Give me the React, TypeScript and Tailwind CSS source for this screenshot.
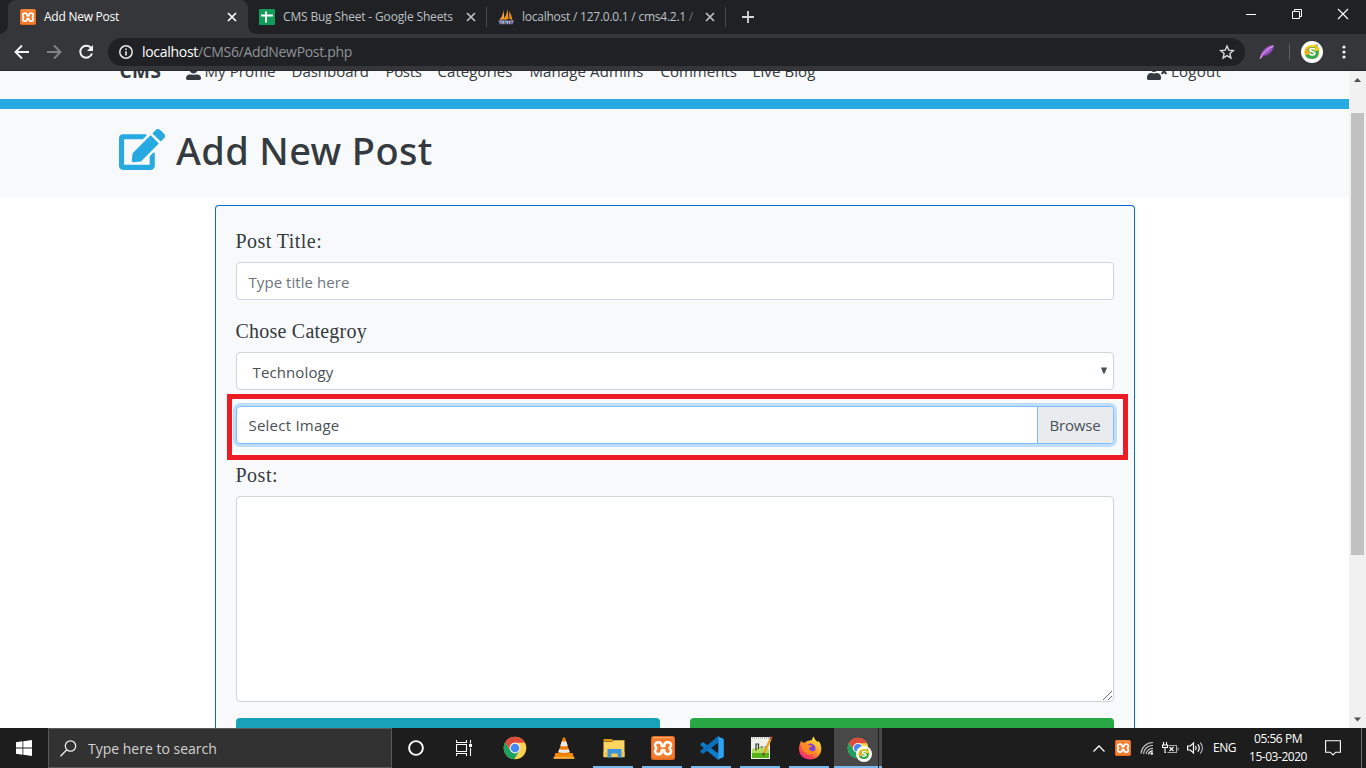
import type { ReactNode } from "react";
import { FaEdit, FaUserAlt, FaUserTimes } from "react-icons/fa";

function XamppIcon({ className }: { className: string }) {
  return (
    <svg viewBox="0 0 24 24" className={className}>
      <rect width="24" height="24" rx="2.5" fill="#e2691f" />
      <rect x="1" y="1" width="22" height="21.5" rx="2" fill="#f47c2c" />
      <path d="M2 1.600h20" stroke="#fba869" strokeWidth="1.200" />
      <path
        d="M7.600 6.200c2.200 0 3.200 1.300 3.200 4h2.400c0-2.700 1-4 3.200-4 2.400 0 3.600 1.400 3.600 3 0 1.600-1.300 2-1.300 3s1.300 1.500 1.300 3.100c0 1.600-1.200 3-3.600 3-2.200 0-3.200-1.300-3.200-4h-2.400c0 2.700-1 4-3.200 4-2.400 0-3.600-1.400-3.600-3 0-1.600 1.300-2.100 1.300-3.100s-1.300-1.400-1.300-3c0-1.600 1.200-3 3.600-3z"
        fill="#f47c2c"
        stroke="#fff"
        strokeWidth="2.500"
        strokeLinejoin="round"
      />
    </svg>
  );
}

function SheetsIcon() {
  return (
    <svg viewBox="0 0 16 16" className="size-4">
      <rect width="16" height="16" rx="1" fill="#0f9d58" />
      <path d="M2 6.500h12M7 2.500v11" stroke="#fff" strokeWidth="2" />
    </svg>
  );
}

function PhpMyAdminIcon() {
  return (
    <svg viewBox="0 0 16 16" className="size-4">
      <path d="M5.500 1 6.500 10 1 11.500Q5 7 5.500 1z" fill="#f0a04a" />
      <path d="M9.500 0 10.500 10 5.500 11Q9 6 9.500 0z" fill="#f89c0e" />
      <path d="M11 2Q14 6 14.500 11l-3.200-1z" fill="#e8871e" />
      <path d="M0 11.200h16l-1.200 4H1.500z" fill="#6c6f96" />
      <path d="M2 12.500h2v2m1.500-3v3m2-2h2v2m2-2.500v2.500m2-2h1.500" stroke="#c5c7e0" strokeWidth=".8" fill="none" />
    </svg>
  );
}

function CloseIcon({ color }: { color: string }) {
  return (
    <svg viewBox="0 0 10 10" className="size-2.5">
      <path d="M1 1l8 8M9 1l-8 8" stroke={color} strokeWidth="1.700" />
    </svg>
  );
}

function ProfileBadge({ className }: { className: string }) {
  return (
    <svg viewBox="0 0 22 22" className={className}>
      <circle cx="11" cy="11" r="11" fill="#fff" />
      <path d="M3.500 11C3.500 6 8 3.500 12 4.500l2-1.500 3 2.500c2 2 2 9-1 11L9 17.500C5 17 3.500 14 3.500 11z" fill="#f9d013" />
      <path d="M17.500 9c1 5-1.500 9-5.500 9-4 0-6.500-1-8-4l7-2z" fill="#35a853" />
      <path d="M3.500 11.500C4 8 6 6 8 5.500l-1 6-1.500 3z" fill="#f2a91d" />
      <path d="M14 8.300c-1.400-1.100-5.200-1-5.200.8 0 2.200 5 .9 5 3.200 0 2-3.900 2-5.400.6" fill="none" stroke="#4aa53c" strokeWidth="3.400" />
      <path d="M14 8.300c-1.400-1.100-5.200-1-5.200.8 0 2.200 5 .9 5 3.200 0 2-3.900 2-5.400.6" fill="none" stroke="#fff" strokeWidth="1.900" />
      <path d="M15 5.500l2-2" stroke="#9aa0a6" strokeWidth="1.500" />
    </svg>
  );
}

function ChromeIcon({ className }: { className: string }) {
  return (
    <svg viewBox="0 0 24 24" className={className}>
      <circle cx="12" cy="12" r="11.300" fill="#ffd24d" />
      <path d="M2.200 6.350A11.300 11.300 0 0 0 11.200 23.300L16.600 14.600 12 12 7.400 14.600z" fill="#1aa15f" />
      <path d="M2.200 6.350A11.300 11.300 0 0 1 21.800 6.700H12A5.300 5.300 0 0 0 6.900 13.400z" fill="#dd4b3e" />
      <circle cx="12" cy="12" r="5.400" fill="#f1f1f1" />
      <circle cx="12" cy="12" r="4.300" fill="#4587f3" />
    </svg>
  );
}

function VlcIcon() {
  return (
    <svg viewBox="0 0 24 24" className="size-6">
      <path d="M3.500 17h17l1.700 5.500H1.800z" fill="#f58a0b" />
      <path d="M1.800 21h20.400l.3 1.800h-21z" fill="#ffb347" />
      <path d="M11 1.500h2l5.200 16.500q-6.200 3-12.400 0z" fill="#ef7d0c" />
      <path d="M9.700 5.500h4.600l1.400 4.300q-3.700 1.400-7.400 0zM7.300 13q4.700 1.700 9.400 0l1 3q-5.700 2.200-11.400 0z" fill="#e9e9e9" />
    </svg>
  );
}

function ExplorerIcon() {
  return (
    <svg viewBox="0 0 24 24" className="size-6">
      <path d="M1.500 3h8.500l1.500 2.500h-10z" fill="#e09a0c" />
      <path d="M1.500 5.800h9l1-1.500h11v17h-21z" fill="#fcd462" />
      <path d="M1.500 16h21v4.500h-21z" fill="#f7c84a" />
      <path d="M5.500 13h14v8.500h-3.800v-4h-6.400v4H5.500z" fill="#3a93dd" />
    </svg>
  );
}

function VsCodeIcon() {
  return (
    <svg viewBox="0 0 24 24" className="size-6">
      <path d="M.5 7.800 2.800 6 18.500 17.500V23.700q-.5.100-.9-.2L.5 9.300z" fill="#0b7dc9" />
      <path d="M.5 16.200 2.800 18 18.500 6.500V.3q-.5-.1-.9.200L.5 14.700z" fill="#0a70bb" />
      <path d="M17.600.2 23.800 3v18l-6.200 2.800q.7-.4.700-1.400V1.600q0-1-.7-1.400z" fill="#2ca5f3" />
    </svg>
  );
}

function NotepadIcon() {
  return (
    <svg viewBox="0 0 24 24" className="size-6">
      <path d="M2 1h19v22H2z" fill="#eef1ea" />
      <path d="M3 13q8-3 17 0v9H3z" fill="#b4dc5e" />
      <path d="M3 17h17v5H3z" fill="#56b318" />
      <path d="M3 2h17" stroke="#8d8d8d" strokeWidth="1" strokeDasharray="1 1" />
      <path d="M7 7.500v7M7 8h2.500v5M11.500 11h2.500M15.500 11h1.500" stroke="#30382b" strokeWidth="1.200" fill="none" />
      <path d="M21.500 3 15 17.500" stroke="#ef9e28" strokeWidth="2.400" />
      <path d="M22.700.5l-1.200 2.800" stroke="#a3483f" strokeWidth="2.400" />
      <path d="M15 17l-.8 2.200" stroke="#3b3b3b" strokeWidth="1.500" />
    </svg>
  );
}

function FirefoxIcon() {
  return (
    <svg viewBox="0 0 24 24" className="size-6">
      <defs>
        <linearGradient id="fox" x1=".85" y1=".1" x2=".2" y2="1">
          <stop offset="0" stopColor="#ffe83f" />
          <stop offset=".45" stopColor="#ff9a25" />
          <stop offset=".75" stopColor="#ff4650" />
          <stop offset="1" stopColor="#e8238d" />
        </linearGradient>
      </defs>
      <path d="M3.200 4.800 5 6.800l2.200-.4C9 4.500 12.500 4.500 14 4c.2-1.500.6-2.500 1.800-3.500.4 2.500 2 3.500 4 5.500l1-1c2.500 4 3 7 2.200 10.500-1.300 5-5.500 8-11 8C6 23.500 1 19.500 1 13c0-3 1-5.500 2.200-8.200z" fill="url(#fox)" />
      <circle cx="12.500" cy="12.500" r="5" fill="#7b45d8" />
      <path d="M4.500 8.500c3-2 5.500-.5 7 .8l3 .2c-1 1.700-3 1.500-3.500 3 .5 3 4.500 3.500 6.500 1.500-1 4-5 5.500-8.500 4-4-1.500-5.500-5-4.500-9.500z" fill="#ff8a22" />
    </svg>
  );
}

const tabText = "font-['Open_Sans',sans-serif] text-[12px] leading-4 whitespace-nowrap";

function TabStrip() {
  return (
    <div className="flex h-[34px] bg-[#202124]">
      <div className="relative ml-2 flex w-60 items-center rounded-t-lg bg-[#35363a] pl-3">
        <span className="absolute bottom-0 -left-2 size-2 bg-[radial-gradient(circle_at_0_0,#202124_7.5px,#35363a_8px)]" />
        <span className="absolute -right-2 bottom-0 size-2 bg-[radial-gradient(circle_at_100%_0,#202124_7.5px,#35363a_8px)]" />
        <XamppIcon className="size-4" />
        <span className={`${tabText} ml-2 w-[183px] tracking-[-0.25px] text-white`}>Add New Post</span>
        <CloseIcon color="#fff" />
      </div>
      <div className="flex w-[239px] items-center pl-[11px]">
        <SheetsIcon />
        <span className={`${tabText} ml-2 w-[183px] tracking-[-0.16px] text-[#bdc1c6]`}>CMS Bug Sheet - Google Sheets</span>
        <CloseIcon color="#bdc1c6" />
        <span className="ml-[10px] h-5 w-px shrink-0 bg-[#4a4c50]" />
      </div>
      <div className="flex w-[239px] items-center pl-[11px]">
        <PhpMyAdminIcon />
        <span className={`${tabText} ml-2 w-[183px] tracking-[-0.24px] text-[#bdc1c6]`}>
          localhost / 127.0.0.1 / cms4.2.1 <span className="text-[#6d7074]">/</span>
        </span>
        <CloseIcon color="#bdc1c6" />
        <span className="ml-[10px] h-5 w-px shrink-0 bg-[#4a4c50]" />
      </div>
      <div className="flex flex-1 items-center pl-[16px]">
        <svg viewBox="0 0 12 12" className="size-3">
          <path d="M6 0v12M0 6h12" stroke="#d5d7da" strokeWidth="1.800" />
        </svg>
      </div>
      <div className="flex h-7 items-center gap-9 pr-[18px]">
        <svg viewBox="0 0 10 10" className="size-2.5">
          <path d="M0 5.500h10" stroke="#fff" />
        </svg>
        <svg viewBox="0 0 10 10" className="size-2.5 overflow-visible" fill="none" stroke="#fff">
          <path d="M.5 2.500h7v7h-7zM2.500 2.500v-2h7v7h-2" />
        </svg>
        <svg viewBox="0 0 10 10" className="size-2.5 overflow-visible">
          <path d="M0 0l10 10M10 0L0 10" stroke="#fff" strokeWidth="1.100" />
        </svg>
      </div>
    </div>
  );
}

function Toolbar() {
  return (
    <div className="flex h-[37px] items-center border-b border-[#28292c] bg-[#35363a]">
      <svg viewBox="0 0 16 16" className="ml-[14px] size-4" fill="none" stroke="#f1f3f4" strokeWidth="1.900">
        <path d="M15 8H2M8 1.500L1.500 8 8 14.500" />
      </svg>
      <svg viewBox="0 0 16 16" className="ml-4 size-4" fill="none" stroke="#828386" strokeWidth="1.900">
        <path d="M1 8h13M8 1.500L14.500 8 8 14.500" />
      </svg>
      <svg viewBox="0 0 16 16" className="ml-4 size-4">
        <path d="M13.200 4.200A6 6 0 1 0 14 9.500" fill="none" stroke="#f1f3f4" strokeWidth="2" />
        <path d="M15 1v6H9z" fill="#f1f3f4" />
      </svg>
      <div className="ml-[14px] flex h-7 w-[1137px] items-center rounded-full bg-[#202124] pl-[11px] font-['Open_Sans',sans-serif] text-[14px] leading-5">
        <svg viewBox="0 0 14 14" className="size-[14px]" fill="none">
          <circle cx="7" cy="7" r="6.200" stroke="#e8eaed" strokeWidth="1.500" />
          <path d="M7 6.200v4.300M7 3.500v1.500" stroke="#e8eaed" strokeWidth="1.600" />
        </svg>
        <span className="ml-[9px] w-14 tracking-[-0.3px] text-white">localhost</span>
        <span className="tracking-[-0.33px] text-[#8f9398]">/CMS6/AddNewPost.php</span>
        <svg viewBox="0 0 16 16" className="mr-[10px] ml-auto size-4" fill="none">
          <path d="M8 2l1.800 4.200 4.500.4-3.400 3 1 4.400L8 11.600 4.100 14l1-4.400-3.400-3 4.500-.4z" stroke="#dadce0" strokeWidth="1.400" />
        </svg>
      </div>
      <svg viewBox="0 0 16 16" className="ml-[14px] size-4">
        <path d="M1 15C1 9 6 2 15 1c-.5 6-4 10-10 10.500z" fill="#a25bc8" />
        <path d="M1 15C4 9 8 5 14 2" stroke="#dcb0ee" strokeWidth="1" fill="none" />
        <path d="M4 11.500c4 0 8-3 10-7" stroke="#733a9d" strokeWidth="1.200" fill="none" />
      </svg>
      <span className="ml-[14px] h-4 w-px bg-[#606266]" />
      <ProfileBadge className="ml-[11px] size-[22px]" />
      <svg viewBox="0 0 4 14" className="ml-[19px] h-[14px] w-1" fill="#f1f3f4">
        <circle cx="2" cy="2" r="1.600" />
        <circle cx="2" cy="7" r="1.600" />
        <circle cx="2" cy="12" r="1.600" />
      </svg>
    </div>
  );
}

function SiteNav() {
  return (
    <nav className="h-7 overflow-hidden bg-[#f8f9fa] text-[#343a40]">
      <div className="-mt-6 flex h-12 items-center pl-[119.5px] text-[15px] whitespace-nowrap">
        <span className="w-[66px] text-[19px] font-bold tracking-[0.5px]">CMS</span>
        <FaUserAlt className="mt-0.5 size-[15px]" />
        <span className="ml-1 w-[87px] tracking-[0.09px]">My Profile</span>
        <span className="w-[94px]">Dashboard</span>
        <span className="w-[52px] tracking-[-0.34px]">Posts</span>
        <span className="w-[92px] tracking-[0.08px]">Categories</span>
        <span className="w-[131px] tracking-[0.11px]">Manage Admins</span>
        <span className="w-[92px]">Comments</span>
        <span className="tracking-[0.1px]">Live Blog</span>
        <FaUserTimes className="mt-0.5 mr-1 ml-auto h-4 w-5" />
        <span className="mr-32 w-[50px] tracking-[0.24px]">Logout</span>
      </div>
    </nav>
  );
}

function FieldLabel({ children, className }: { children: ReactNode; className: string }) {
  return (
    <label className={`block h-6 font-['Liberation_Serif',serif] text-[20px] leading-6 text-[#343a40] ${className}`}>
      {children}
    </label>
  );
}

function PostForm() {
  return (
    <form className="mx-auto mt-2 h-[523px] w-[920px] rounded-t border border-b-0 border-[#0a6ad4] bg-[#f8f9fa] px-5 pt-[23px] text-[15px] text-[#495057]">
      <FieldLabel className="tracking-[0.45px]">Post Title:</FieldLabel>
      <div className="mt-[9px] flex h-[38px] items-center rounded border border-[#ced4da] bg-white px-3 pt-0.5 tracking-[0.06px] text-[#6c757d]">Type title here</div>
      <FieldLabel className="mt-[19px] tracking-[0.22px]">Chose Categroy</FieldLabel>
      <div className="mt-[9px] flex h-[38px] items-center justify-between rounded border border-[#ced4da] bg-white pr-[6px] pl-4">
        <span className="pt-0.5 tracking-[0.12px]">Technology</span>
        <svg viewBox="0 0 6 7" className="-mt-0.5 h-[7px] w-1.5">
          <path d="M0 .5h6L3.700 6.500H2.300z" fill="#495057" />
        </svg>
      </div>
      <div className="relative mt-4 flex h-[38px] rounded border border-[#80bdff] bg-white shadow-[0_0_0_3px_#bfdefd]">
        <span className="flex flex-1 items-center pl-3 tracking-[0.23px]">Select Image</span>
        <span className="flex w-[76px] items-center rounded-r-[3px] border-l border-[#80bdff] bg-[#e9ecef] pl-3 tracking-[-0.17px]">Browse</span>
        <span className="absolute -top-[13px] -right-[15px] -bottom-[17px] -left-[10px] border-[5px] border-[#ed1c24]" />
      </div>
      <FieldLabel className="mt-[19px] tracking-[0.5px]">Post:</FieldLabel>
      <div className="mt-[9px] flex h-[206px] items-end justify-end rounded border border-[#ced4da] bg-white p-px">
        <svg viewBox="0 0 9 9" className="size-[9px]">
          <path d="M0 9L9 0M5 9L9 5" stroke="#6b6b6b" strokeWidth="1" />
        </svg>
      </div>
      <div className="mt-4 flex h-[10px] gap-[30px]">
        <span className="flex-1 rounded-t bg-[#17a2b8]" />
        <span className="flex-1 rounded-t bg-[#28a745]" />
      </div>
    </form>
  );
}

function Scrollbar() {
  return (
    <div className="flex w-[17px] flex-col items-center bg-[#f1f1f1]">
      <svg viewBox="0 0 17 17" className="size-[17px]">
        <path d="M8.500 7L12 11H5z" fill="#505050" />
      </svg>
      <span className="mt-[25px] h-[442px] w-[13px] bg-[#c1c1c1]" />
      <svg viewBox="0 0 17 17" className="mt-auto size-[17px]">
        <path d="M8.500 10.500L12 6.500H5z" fill="#505050" />
      </svg>
    </div>
  );
}

function TaskButton({ children, open, active }: { children: ReactNode; open?: boolean; active?: boolean }) {
  return (
    <div className={`relative flex items-center justify-center ${active ? "w-12 bg-[#484848]" : "w-[49px]"}`}>
      {children}
      {open && <span className={`absolute bottom-0 h-0.5 bg-[#76b9ed] ${active ? "inset-x-0" : "right-[5px] left-1"}`} />}
      {active && <span className="absolute inset-y-0 right-[3px] w-px bg-[#222]" />}
    </div>
  );
}

function Taskbar() {
  return (
    <div className="flex h-10 bg-[#1d1d1d] text-white">
      <div className="flex w-12 items-center justify-center">
        <svg viewBox="0 0 16 16" className="size-4" fill="#fff">
          <path d="M0 2.200l6.500-.9v6.200H0zM7.300 1.200L16 0v7.500H7.300zM0 8.400h6.500v6.300L0 13.800zM7.300 8.400H16V16l-8.700-1.200z" />
        </svg>
      </div>
      <div className="flex w-[344px] items-center border border-[#5a5a5a] bg-[#323232]">
        <svg viewBox="0 0 17 17" className="ml-[11px] size-[17px]" fill="none" stroke="#eee" strokeWidth="1.300">
          <circle cx="10.500" cy="6" r="5.200" />
          <path d="M6.800 9.700L.5 16.300" />
        </svg>
        <span className="ml-[11px] text-[14px] text-[#d2d2d2]">Type here to search</span>
      </div>
      <TaskButton>
        <svg viewBox="0 0 16 16" className="mr-px size-4">
          <circle cx="8" cy="8" r="6.900" fill="none" stroke="#fff" strokeWidth="1.900" />
        </svg>
      </TaskButton>
      <TaskButton>
        <svg viewBox="0 0 16 16" className="-ml-1 size-4" fill="none" stroke="#fff" strokeWidth="1.100">
          <path d="M.5 4.500h10v7H.5zM.5 0v2.500h10V0M.5 16v-2.500h10V16M14.500 0v3.500M14.500 8v8" />
          <path d="M14.500 4v3" strokeWidth="3" />
        </svg>
      </TaskButton>
      <TaskButton>
        <ChromeIcon className="size-6" />
      </TaskButton>
      <TaskButton>
        <VlcIcon />
      </TaskButton>
      <div className="ml-px flex">
        <TaskButton open>
          <ExplorerIcon />
        </TaskButton>
        <TaskButton open>
          <XamppIcon className="size-6" />
        </TaskButton>
        <TaskButton open>
          <VsCodeIcon />
        </TaskButton>
        <TaskButton open>
          <NotepadIcon />
        </TaskButton>
        <TaskButton open>
          <FirefoxIcon />
        </TaskButton>
        <TaskButton open active>
          <ChromeIcon className="size-[22px]" />
          <ProfileBadge className="absolute top-[18px] left-[22px] size-4" />
        </TaskButton>
      </div>
      <div className="ml-auto flex items-center pr-1 text-[12px] leading-[18px] whitespace-nowrap">
        <svg viewBox="0 0 12 7" className="h-[7px] w-3" fill="none" stroke="#fff" strokeWidth="1.300">
          <path d="M.5 6.500L6 1l5.500 5.500" />
        </svg>
        <XamppIcon className="ml-[10px] size-4" />
        <svg viewBox="0 0 14 14" className="ml-[9px] size-[14px]" fill="none" strokeWidth="1.200">
          <path d="M1 12.500A12 12 0 0 1 13 1.500M3.500 13A9 9 0 0 1 13 4.500M6 13A6.500 6.500 0 0 1 13 7.500" stroke="#c9c9c9" />
          <path d="M8.500 13.500A4 4 0 0 1 13 10" stroke="#fff" />
          <circle cx="11.800" cy="12.500" r="1.300" fill="#fff" />
        </svg>
        <svg viewBox="0 0 17 14" className="ml-2 h-[14px] w-[17px]" fill="none" stroke="#fff" strokeWidth="1.100">
          <path d="M1.500 1v3M4.500 1v3M.5 4h5v2.500h-5zM3 6.500v5h1" />
          <path d="M6.500 4.500h8v7h-9M16 6.500v3" stroke="#aaa" />
          <path d="M7.500 6l4 4M11.500 6l-4 4" />
        </svg>
        <svg viewBox="0 0 17 14" className="ml-2 h-[14px] w-[17px]" fill="none" stroke="#fff" strokeWidth="1.200">
          <path d="M.6 5h2.600L6.500 2v10L3.200 9H.6zM8.500 5q1.500 2 0 4M10.800 3.300q3 3.700 0 7.400" />
          <path d="M13.200 1.500q4.500 5.500 0 11" stroke="#aaa" />
        </svg>
        <span className="ml-[9px] w-[23px] tracking-[-0.48px]">ENG</span>
        <div className="ml-[12px] w-[60px] text-center tracking-[-0.47px]">
          <div>05:56 PM</div>
          <div>15-03-2020</div>
        </div>
        <svg viewBox="0 0 16 16" className="ml-[17px] h-4 w-4" fill="none" stroke="#fff" strokeWidth="1.100">
          <path d="M.6 .8h14.800v11.400h-4.700L8 15l-2.700-2.800H.6z" />
        </svg>
        <span className="ml-5 h-10 w-px bg-[#6a6a6a]" />
      </div>
    </div>
  );
}

export default function App() {
  return (
    <div className="flex h-[768px] w-[1366px] flex-col overflow-hidden bg-white font-['Open_Sans',sans-serif]">
      <TabStrip />
      <Toolbar />
      <div className="flex min-h-0 flex-1">
        <main className="w-[1349px] overflow-hidden">
          <SiteNav />
          <div className="h-[10px] bg-[#27aae1]" />
          <header className="flex h-[88px] items-start bg-[#f8f9fa] pl-[119px] text-[#343a40]">
            <FaEdit className="mt-[20px] h-[41px] w-[46px] text-[#27aae1]" />
            <h1 className="ml-[11px] pt-[13px] font-['Noto_Sans',sans-serif] text-[38px] leading-[56px] font-medium tracking-[0.36px] whitespace-nowrap">Add New Post</h1>
          </header>
          <PostForm />
        </main>
        <Scrollbar />
      </div>
      <Taskbar />
    </div>
  );
}
